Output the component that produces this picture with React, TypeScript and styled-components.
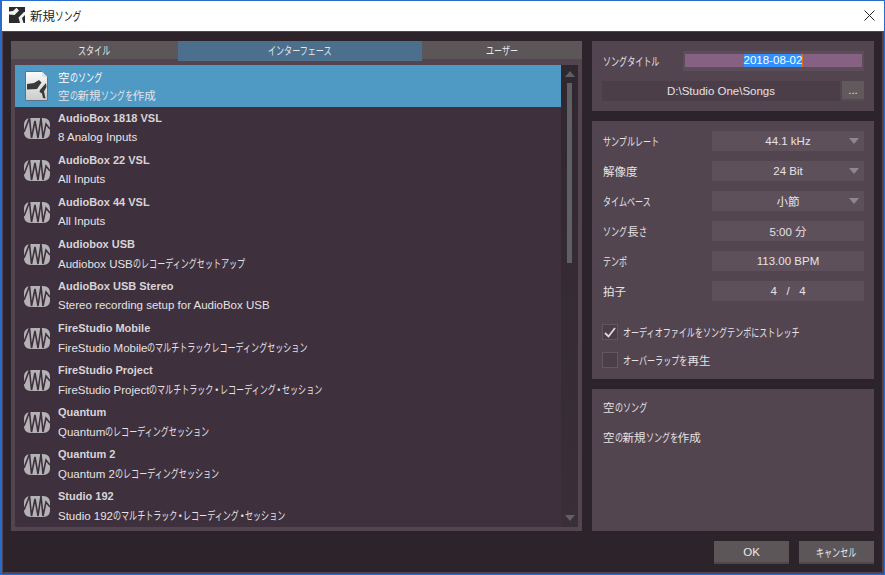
import React from 'react'

import styled, { createGlobalStyle } from 'styled-components'

const GlobalStyle = createGlobalStyle`
  html, body {
    margin: 0;
    padding: 0;
    background: #2d232b;
  }
  * {
    box-sizing: border-box;
  }
`

const FONT = `"Liberation Sans", "Noto Sans CJK JP", sans-serif`

// the original UI font has narrow kana, so kana runs get squeezed horizontally
const KANA_SCALE = 0.7

const Ja: React.FC<{ text: string }> = ({ text }) => (
  <>
    {text.split(/([\u3040-\u30FA\u30FC-\u30FF]+|・)/).map((part, i) => {
      if (part === '・') return <StyledDot key={i}>{part}</StyledDot>
      if (i % 2 === 1) {
        return (
          <StyledKana key={i} style={{ width: `${part.length * KANA_SCALE}em` }}>
            {part}
          </StyledKana>
        )
      }
      return part
    })}
  </>
)

const hasKana = (text: string) => /[\u3040-\u30FF]/.test(text)

const songs = [
  { title: 'AudioBox 1818 VSL', sub: '8 Analog Inputs' },
  { title: 'AudioBox 22 VSL', sub: 'All Inputs' },
  { title: 'AudioBox 44 VSL', sub: 'All Inputs' },
  { title: 'Audiobox USB', sub: 'Audiobox USBのレコーディングセットアップ' },
  { title: 'AudioBox USB Stereo', sub: 'Stereo recording setup for AudioBox USB' },
  { title: 'FireStudio Mobile', sub: 'FireStudio Mobileのマルチトラックレコーディングセッション' },
  { title: 'FireStudio Project', sub: 'FireStudio Projectのマルチトラック・レコーディング・セッション' },
  { title: 'Quantum', sub: 'Quantumのレコーディングセッション' },
  { title: 'Quantum 2', sub: 'Quantum 2のレコーディングセッション' },
  { title: 'Studio 192', sub: 'Studio 192のマルチトラック・レコーディング・セッション' },
]

const settings = [
  { label: 'サンプルレート', value: '44.1 kHz', arrow: true },
  { label: '解像度', value: '24 Bit', arrow: true },
  { label: 'タイムベース', value: '小節', arrow: true },
  { label: 'ソング長さ', value: '5:00 分', arrow: false },
  { label: 'テンポ', value: '113.00 BPM', arrow: false },
  { label: '拍子', value: '4   /   4', arrow: false },
]

const AppLogo = () => (
  <svg width="16" height="16" viewBox="0 0 16 16">
    <rect width="16" height="16" fill="#2b2b2b" />
    <path d="M0 4.500 L4 4 L7.500 0.800 L10 3.500 L5.500 8 L0 7.500 Z" fill="#f2f2f2" />
    <path d="M15 5 L9.500 10.500 L11 16 L14.500 16 L13 11 L16 8 V5 Z" fill="#f2f2f2" />
  </svg>
)

const SongFileIcon = () => (
  <svg width="23" height="30" viewBox="0 0 23 30">
    <defs>
      <linearGradient id="page" x1="0" y1="0" x2="0" y2="1">
        <stop offset="0" stopColor="#fbfbfb" />
        <stop offset="1" stopColor="#c9cbcc" />
      </linearGradient>
    </defs>
    <path d="M0.500 0.500 H17 L22.500 6 V29.500 H0.500 Z" fill="url(#page)" stroke="#5d7383" />
    <path d="M17 0.500 V6 H22.500 Z" fill="#dfe3e6" />
    <path d="M2 13 L9 12 L14 9 L16.500 11.500 L12 18 L2 18.500 Z" fill="#3a3a3a" />
    <path d="M21 12 L15 19 L14.500 21 L17 22.500 L18 27 L20.500 27.500 L19 20.500 L21.500 16 Z" fill="#3a3a3a" />
  </svg>
)

const PreSonusIcon = () => (
  <svg width="26" height="21" viewBox="0 0 26 21">
    <path
      fill="#b4b2b4"
      d="M7 0 H19 C24 0 26 3 26 7 V14 C26 18 24 21 19 21 H7 C2 21 0 18 0 14 V7 C0 3 2 0 7 0 Z"
    />
    <path
      fill="none"
      stroke="#3e303c"
      strokeWidth="1.600"
      d="M0 14 L5.500 0 L7.500 20 L11 3 L14 20 L17 0 L19 20 L22 6 L26 11"
    />
  </svg>
)

const Scroll = ({ up }: { up?: boolean }) => (
  <svg width="10" height="6" viewBox="0 0 10 6">
    <path d={up ? 'M5 0 L10 6 H0 Z' : 'M0 0 H10 L5 6 Z'} fill="#5f5f66" />
  </svg>
)

const Check = () => (
  <svg width="12" height="11" viewBox="0 0 12 11">
    <path d="M1 6 L4.500 9.500 L11 1" fill="none" stroke="#ddd9dc" strokeWidth="1.800" />
  </svg>
)

const App: React.FC = () => {
  return (
    <>
      <GlobalStyle />
      <StyledWindow>
        <StyledTitleBar>
          <AppLogo />
          <StyledTitle><Ja text="新規ソング" /></StyledTitle>
          <StyledClose>
            <svg width="11" height="11" viewBox="0 0 11 11">
              <path d="M0.500 0.500 L10.500 10.500 M10.500 0.500 L0.500 10.500" stroke="#222" strokeWidth="1" fill="none" />
            </svg>
          </StyledClose>
        </StyledTitleBar>
        <StyledBody>
          <StyledMain>
            <StyledLeftPanel>
              <StyledTabs>
                <StyledTab><Ja text="スタイル" /></StyledTab>
                <StyledTab $active><Ja text="インターフェース" /></StyledTab>
                <StyledTab><Ja text="ユーザー" /></StyledTab>
              </StyledTabs>
              <StyledListFrame>
                <StyledList>
                  <StyledRow $selected>
                    <StyledRowIcon><SongFileIcon /></StyledRowIcon>
                    <StyledRowText>
                      <StyledRowTitle $selected><Ja text="空のソング" /></StyledRowTitle>
                      <StyledRowSub $kana><Ja text="空の新規ソングを作成" /></StyledRowSub>
                    </StyledRowText>
                  </StyledRow>
                  {songs.map(song => (
                    <StyledRow key={song.title}>
                      <StyledRowIcon><PreSonusIcon /></StyledRowIcon>
                      <StyledRowText>
                        <StyledRowTitle>{song.title}</StyledRowTitle>
                        <StyledRowSub $kana={hasKana(song.sub)}><Ja text={song.sub} /></StyledRowSub>
                      </StyledRowText>
                    </StyledRow>
                  ))}
                </StyledList>
                <StyledScrollbar>
                  <Scroll up />
                  <StyledThumb />
                  <Scroll />
                </StyledScrollbar>
              </StyledListFrame>
            </StyledLeftPanel>
            <StyledSide>
              <StyledSongPanel>
                <StyledTitleRow>
                  <StyledLabel><Ja text="ソングタイトル" /></StyledLabel>
                  <StyledTitleField>
                    <StyledTitleInput>
                      <StyledSelection>2018-08-02</StyledSelection>
                      <StyledCaret />
                    </StyledTitleInput>
                  </StyledTitleField>
                </StyledTitleRow>
                <StyledPathRow>
                  <StyledPath>D:\Studio One\Songs</StyledPath>
                  <StyledBrowse>...</StyledBrowse>
                </StyledPathRow>
              </StyledSongPanel>
              <StyledSettingsPanel>
                <StyledSettings>
                  {settings.map(item => (
                    <StyledSettingRow key={item.label}>
                      <StyledLabel><Ja text={item.label} /></StyledLabel>
                      <StyledValue>
                        {item.value}
                        {item.arrow && (
                          <StyledArrow>
                            <svg width="10" height="6" viewBox="0 0 10 6">
                              <path d="M0 0 H10 L5 6 Z" fill="#8e878d" />
                            </svg>
                          </StyledArrow>
                        )}
                      </StyledValue>
                    </StyledSettingRow>
                  ))}
                </StyledSettings>
                <StyledChecks>
                  <StyledCheckRow>
                    <StyledCheckBox><Check /></StyledCheckBox>
                    <span><Ja text="オーディオファイルをソングテンポにストレッチ" /></span>
                  </StyledCheckRow>
                  <StyledCheckRow>
                    <StyledCheckBox />
                    <span><Ja text="オーバーラップを再生" /></span>
                  </StyledCheckRow>
                </StyledChecks>
              </StyledSettingsPanel>
              <StyledInfoPanel>
                <div><Ja text="空のソング" /></div>
                <div><Ja text="空の新規ソングを作成" /></div>
              </StyledInfoPanel>
            </StyledSide>
          </StyledMain>
          <StyledFooter>
            <StyledButton>OK</StyledButton>
            <StyledButton><Ja text="キャンセル" /></StyledButton>
          </StyledFooter>
        </StyledBody>
      </StyledWindow>
    </>
  )
}

const StyledKana = styled.span`
  display: inline-block;
  white-space: nowrap;
  transform: scaleX(${KANA_SCALE});
  transform-origin: left center;
`

const StyledDot = styled.span`
  font-feature-settings: "palt";
`

const StyledWindow = styled.div`
  width: 885px;
  height: 575px;
  display: flex;
  flex-direction: column;
  overflow: hidden;
  border: 1px solid #2a6ccb;
  border-left-width: 2px;
  font-family: ${FONT};
  font-size: 11.5px;
  color: #e6e2e5;
`

const StyledTitleBar = styled.div`
  height: 30px;
  flex-shrink: 0;
  display: flex;
  align-items: center;
  padding: 0 0 2px 7px;
  background: #fff;
`

const StyledTitle = styled.div`
  margin-left: 5px;
  font-size: 12.5px;
  color: #1a1a1a;
`

const StyledClose = styled.div`
  margin-left: auto;
  width: 30px;
  display: flex;
  justify-content: center;
`

const StyledBody = styled.div`
  flex: 1;
  display: flex;
  flex-direction: column;
  min-height: 0;
  background: #2d232b;
  border: 1px solid #53454f;
  border-width: 1px 2px 2px 1px;
  padding: 9px 8px 0 8px;
`

const StyledMain = styled.div`
  display: grid;
  grid-template-columns: 571px 282px;
  column-gap: 10px;
  height: 490px;
  flex-shrink: 0;
`

const StyledLeftPanel = styled.div`
  display: flex;
  flex-direction: column;
  background: linear-gradient(#53454f, #53454f) 0 18px no-repeat, #2d232b;
`

const StyledTabs = styled.div`
  display: grid;
  grid-template-columns: 167px 244px 160px;
  align-items: start;
  height: 20px;
  flex-shrink: 0;
`

const StyledTab = styled.div<{ $active?: boolean }>`
  height: ${props => (props.$active ? '20px' : '18px')};
  padding-bottom: ${props => (props.$active ? '2px' : '0')};
  display: flex;
  align-items: center;
  justify-content: center;
  background: ${props => (props.$active ? '#4b6f8d' : '#5c5659')};
  color: #e8e6e8;
`

const StyledListFrame = styled.div`
  flex: 1;
  display: flex;
  margin: 4px;
  min-height: 0;
`

const StyledList = styled.div`
  flex: 1;
  background: #3e303c;
`

const StyledRow = styled.div<{ $selected?: boolean }>`
  height: 42px;
  display: flex;
  background: ${props => (props.$selected ? '#4f9ac5' : 'transparent')};
`

const StyledRowIcon = styled.div`
  width: 43px;
  flex-shrink: 0;
  display: flex;
  align-items: center;
  justify-content: center;
`

const StyledRowText = styled.div`
  display: flex;
  flex-direction: column;
  justify-content: space-between;
  padding: 4px 0;
  white-space: nowrap;
`

const StyledRowTitle = styled.div<{ $selected?: boolean }>`
  margin-top: ${props => (props.$selected ? '2px' : '0')};
  font-size: ${props => (props.$selected ? '11.5px' : '11px')};
  font-weight: ${props => (props.$selected ? 400 : 700)};
  color: ${props => (props.$selected ? '#fff' : '#d8d4d8')};
  line-height: 15px;
`

const StyledRowSub = styled.div<{ $kana?: boolean }>`
  margin-bottom: ${props => (props.$kana ? '-1px' : '0')};
  color: #e6e2e6;
  line-height: 15px;
`

const StyledScrollbar = styled.div`
  width: 17px;
  flex-shrink: 0;
  display: flex;
  flex-direction: column;
  align-items: center;
  padding: 6px 0;
  background: linear-gradient(#31272f, #3a2f37);
`

const StyledThumb = styled.div`
  width: 5px;
  height: 180px;
  margin: 6px 0 auto;
  background: #5f5f66;
`

const StyledSide = styled.div`
  display: flex;
  flex-direction: column;
  gap: 10px;
`

const StyledSongPanel = styled.div`
  height: 70px;
  flex-shrink: 0;
  padding: 10px;
  display: flex;
  flex-direction: column;
  gap: 10px;
  background: #53454f;
`

const StyledTitleRow = styled.div`
  display: flex;
  align-items: center;
  justify-content: space-between;
  height: 20px;
`

const StyledLabel = styled.div`
  margin-left: 1px;
  color: #e6e2e5;
`

const StyledTitleField = styled.div`
  width: 181px;
  height: 20px;
  padding: 3px 2px;
  background: #5c4e59;
`

const StyledTitleInput = styled.div`
  height: 13px;
  display: flex;
  justify-content: center;
  align-items: center;
  background: #866183;
`

const StyledSelection = styled.span`
  background: #3390ff;
  color: #fff;
  line-height: 13px;
`

const StyledCaret = styled.span`
  width: 1px;
  height: 13px;
  background: #e0701e;
`

const StyledPathRow = styled.div`
  display: flex;
  gap: 2px;
  height: 20px;
`

const StyledPath = styled.div`
  flex: 1;
  display: flex;
  align-items: center;
  justify-content: center;
  background: #4b3e48;
`

const StyledBrowse = styled.div`
  width: 22px;
  display: flex;
  align-items: center;
  justify-content: center;
  background: #615a5d;
  border-bottom: 2px solid #544d50;
`

const StyledSettingsPanel = styled.div`
  height: 258px;
  flex-shrink: 0;
  padding: 10px;
  background: #53454f;
`

const StyledSettings = styled.div`
  display: flex;
  flex-direction: column;
  gap: 10px;
`

const StyledSettingRow = styled.div`
  display: flex;
  align-items: center;
  justify-content: space-between;
  height: 20px;
`

const StyledValue = styled.div`
  position: relative;
  width: 152px;
  height: 20px;
  display: flex;
  align-items: center;
  justify-content: center;
  white-space: pre;
  background: #5e505b;
`

const StyledArrow = styled.span`
  position: absolute;
  right: 5px;
  top: 7px;
  display: flex;
`

const StyledChecks = styled.div`
  display: flex;
  flex-direction: column;
  gap: 12px;
  margin-top: 23px;
`

const StyledCheckRow = styled.div`
  display: flex;
  align-items: center;
  gap: 5px;
  height: 16px;
`

const StyledCheckBox = styled.div`
  width: 16px;
  height: 16px;
  display: flex;
  align-items: center;
  justify-content: center;
  background: #4b3e48;
  border: 1px solid #645660;
`

const StyledInfoPanel = styled.div`
  flex: 1;
  padding: 12px 11px;
  display: flex;
  flex-direction: column;
  gap: 15px;
  line-height: 15px;
  background: #53454f;
`

const StyledFooter = styled.div`
  display: flex;
  justify-content: flex-end;
  gap: 10px;
  margin-top: 10px;
`

const StyledButton = styled.div`
  width: 75px;
  height: 23px;
  display: flex;
  align-items: center;
  justify-content: center;
  background: #5c5659;
  border-bottom: 2px solid #4e484b;
  color: #ece9eb;
`

export default App
